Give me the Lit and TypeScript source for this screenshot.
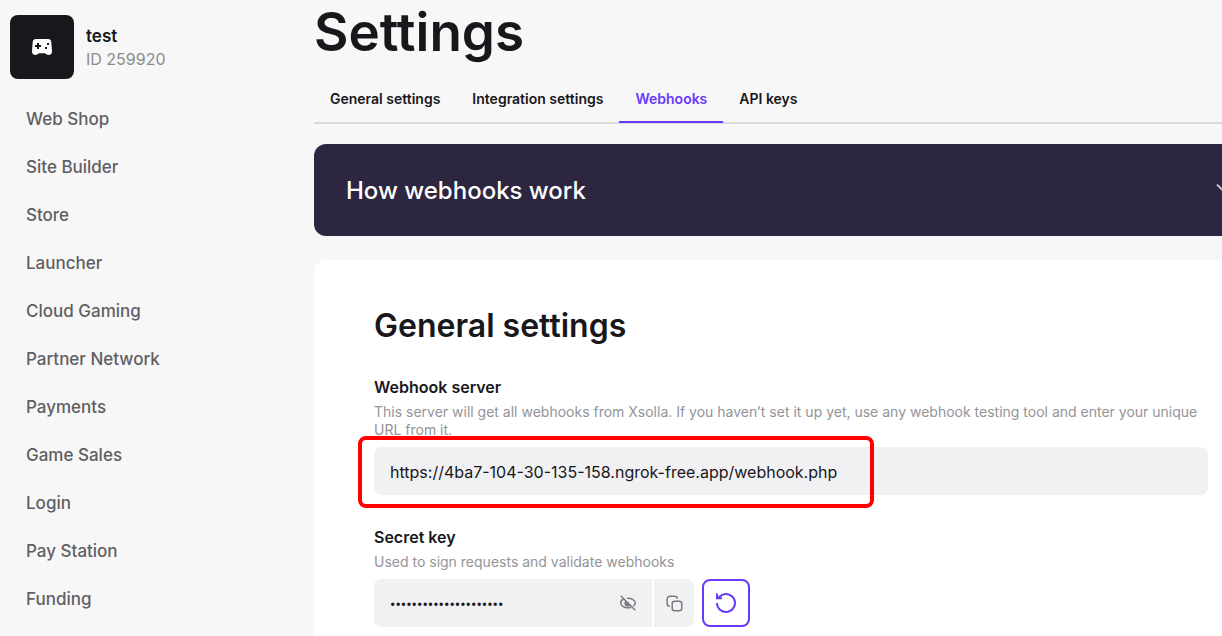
import { LitElement, html, css, svg } from "lit";
import { customElement, property, state } from "lit/decorators.js";
import { classMap } from "lit/directives/class-map.js";

const sections = [
  "Web Shop",
  "Site Builder",
  "Store",
  "Launcher",
  "Cloud Gaming",
  "Partner Network",
  "Payments",
  "Game Sales",
  "Login",
  "Pay Station",
  "Funding",
];

const tabs = ["General settings", "Integration settings", "Webhooks", "API keys"];

const eyeOff = svg`
  <path d="M5 4.700C3 5.600 1.700 7.400 1.700 9c0 2.500 3.300 4.700 7.300 4.700 1.100 0 2.100-.2 3-.5M8 4.300c4.700-.4 8.300 2.200 8.300 4.700 0 1.200-.8 2.400-2.100 3.200" />
  <path d="M6.800 7.400A2.600 2.600 0 0 0 10.600 11z" fill="currentColor" />
  <path d="M1.700 1.700 16.300 16.300" />`;

const copy = svg`
  <rect x="6.200" y="6.200" width="9.600" height="9.600" rx="2.500" />
  <path d="M3.700 11.300A2.600 2.600 0 0 1 1.200 8.700V4A2.800 2.800 0 0 1 4 1.200h4.700A2.600 2.600 0 0 1 11.300 3.700" />`;

@customElement("project-nav")
export class ProjectNav extends LitElement {
  static styles = css`
    :host {
      display: block;
      padding: 15px 10px;
    }
    .project {
      display: flex;
      gap: 12px;
      margin-bottom: 16px;
    }
    .logo {
      display: grid;
      place-items: center;
      width: 64px;
      height: 64px;
      border-radius: 8px;
      background: #18171c;
    }
    .meta {
      padding-top: 10px;
      line-height: 23px;
    }
    .name {
      font-size: 17px;
      font-weight: 600;
      color: #18171c;
    }
    .id {
      color: #8b8b8e;
    }
    .links {
      display: flex;
      flex-direction: column;
      margin: 0;
      padding: 0;
      list-style: none;
    }
    .link {
      display: block;
      padding: 12px 16px;
      font-size: 17px;
      line-height: 24px;
      font-weight: 500;
      color: #5f5f64;
      text-decoration: none;
    }
  `;

  render() {
    return html`
      <div class="project">
        <div class="logo">
          <svg width="20" height="16" viewBox="0 0 20 16" aria-hidden="true">
            <path fill="#fff" d="M4 0h12c2 0 3.100 1.200 3.300 3L20 12c.1 2.400-1.200 4-3.300 4-1.300 0-2.200-.5-3-1.200-.6-.5-1-.6-1.700-.6H8c-.7 0-1.100.1-1.700.6-.8.700-1.700 1.200-3 1.200C1.200 16-.1 14.400 0 12L.7 3C.9 1.200 2 0 4 0z" />
            <path fill="#18171c" d="M5 4h2v2h2v2H7v2H5V8H3V6h2zM15 4h2v2h-2zM13 8h2v2h-2z" />
          </svg>
        </div>
        <div class="meta">
          <div class="name">test</div>
          <div class="id">ID 259920</div>
        </div>
      </div>
      <nav>
        <ul class="links">
          ${sections.map((s) => html`<li><a class="link" href="#">${s}</a></li>`)}
        </ul>
      </nav>
    `;
  }
}

@customElement("webhook-settings")
export class WebhookSettings extends LitElement {
  @property() server = "https://4ba7-104-30-135-158.ngrok-free.app/webhook.php";
  @state() private revealed = false;

  static styles = css`
    :host {
      display: block;
      padding: 44px 60px;
      border-radius: 12px;
      background: #fff;
    }
    .title {
      margin: 0 0 28px;
      font-size: 32px;
      line-height: 44px;
      font-weight: 600;
    }
    .label {
      display: block;
      line-height: 22px;
      font-weight: 600;
    }
    .hint {
      margin: 5px 0 8px;
      font-size: 14px;
      line-height: 18px;
      color: #949497;
    }
    .group {
      margin-bottom: 31px;
    }
    .field {
      position: relative;
    }
    .input {
      box-sizing: border-box;
      display: block;
      width: 100%;
      height: 48px;
      padding: 2px 16px 0;
      border: 0;
      border-radius: 8px;
      background: #f1f1f3;
      color: #18171c;
      font: inherit;
    }
    .masked {
      font-family: Roboto, sans-serif;
    }
    .highlight {
      position: absolute;
      top: -11px;
      left: -16px;
      box-sizing: border-box;
      width: 516px;
      height: 72px;
      border: 4px solid #f00;
      border-radius: 8px;
      pointer-events: none;
    }
    .secret {
      display: flex;
      gap: 2px;
    }
    .secret-field {
      display: flex;
      width: 278px;
      border-radius: 8px 0 0 8px;
      background: #f1f1f3;
    }
    .icon-button {
      display: grid;
      place-items: center;
      flex: none;
      padding: 0;
      border: 0;
      width: 48px;
      height: 48px;
      background: transparent;
      color: #7c7c80;
    }
    .copy {
      width: 40px;
      border-radius: 0 8px 8px 0;
      background: #f1f1f3;
    }
    .refresh {
      margin-left: 6px;
      border: 2px solid #6939f9;
      border-radius: 8px;
      color: #6939f9;
    }
  `;

  render() {
    return html`
      <h2 class="title">General settings</h2>
      <div class="group">
        <label class="label" for="server">Webhook server</label>
        <p class="hint">
          This server will get all webhooks from Xsolla. If you haven’t set it up yet, use any
          webhook testing tool and enter your unique URL from it.
        </p>
        <div class="field">
          <input class="input" id="server" type="text" .value=${this.server} />
          <div class="highlight"></div>
        </div>
      </div>
      <div class="group">
        <label class="label" for="secret">Secret key</label>
        <p class="hint">Used to sign requests and validate webhooks</p>
        <div class="secret">
          <div class="secret-field">
            <input
              class=${classMap({ input: true, masked: !this.revealed })}
              id="secret"
              type=${this.revealed ? "text" : "password"}
              .value=${"k".repeat(21)}
            />
            <button
              class="icon-button"
              aria-label="Show key"
              @click=${() => (this.revealed = !this.revealed)}
            >
              <svg width="18" height="18" viewBox="0 0 18 18" fill="none" stroke="currentColor" stroke-width="1.500">${eyeOff}</svg>
            </button>
          </div>
          <button class="icon-button copy" aria-label="Copy key">
            <svg width="17" height="17" viewBox="0 0 17 17" fill="none" stroke="currentColor" stroke-width="1.500">${copy}</svg>
          </button>
          <button class="icon-button refresh" aria-label="Generate new key">
            <svg width="24" height="24" viewBox="0 0 24 24" fill="none" stroke="currentColor" stroke-width="2">
              <path d="M3 12a9 9 0 1 0 3-6.700L3.500 7.200" />
              <path d="M3 2.500V7.300H8" />
            </svg>
          </button>
        </div>
      </div>
    `;
  }
}

@customElement("app-root")
export class AppRoot extends LitElement {
  @state() private active = "Webhooks";

  static styles = css`
    :host {
      display: grid;
      grid-template-columns: 314px minmax(0, 1fr);
      height: 100vh;
      overflow: hidden;
      background: #f7f7f7;
      color: #18171c;
      font-family: Inter, "Noto Sans", sans-serif;
      font-size: 16px;
    }
    .main {
      margin-right: -46px;
    }
    .heading {
      margin: 0;
      font-size: 53px;
      line-height: 64px;
      font-weight: 600;
    }
    .tabs {
      display: flex;
      margin: 12px 0 20px;
      border-bottom: 2px solid #d9d9de;
    }
    .tab {
      margin-bottom: -1px;
      padding: 12px 16px;
      border: 0;
      border-bottom: 2px solid transparent;
      background: none;
      color: #18171c;
      font: inherit;
      font-size: 14px;
      line-height: 21px;
      font-weight: 600;
    }
    .active {
      border-color: #6939f9;
      color: #6939f9;
    }
    .banner {
      box-sizing: border-box;
      display: flex;
      align-items: center;
      justify-content: space-between;
      width: 100%;
      margin-bottom: 24px;
      padding: 31px 32px 29px;
      border: 0;
      border-radius: 12px;
      background: #2d2640;
      color: #fff;
      font: inherit;
      font-size: 24px;
      line-height: 32px;
      font-weight: 500;
    }
  `;

  render() {
    return html`
      <project-nav></project-nav>
      <main class="main">
        <h1 class="heading">Settings</h1>
        <div class="tabs" role="tablist">
          ${tabs.map(
            (t) => html`<button
              role="tab"
              aria-selected=${t === this.active}
              class=${classMap({ tab: true, active: t === this.active })}
              @click=${() => (this.active = t)}
            >${t}</button>`
          )}
        </div>
        <button class="banner">
          <span>How webhooks work</span>
          <svg width="24" height="24" viewBox="0 0 24 24" fill="none" stroke="#c0bec6" stroke-width="2" aria-hidden="true">
            <path d="M5 5.500 12 12.500 19 5.500" />
          </svg>
        </button>
        <webhook-settings></webhook-settings>
      </main>
    `;
  }
}
